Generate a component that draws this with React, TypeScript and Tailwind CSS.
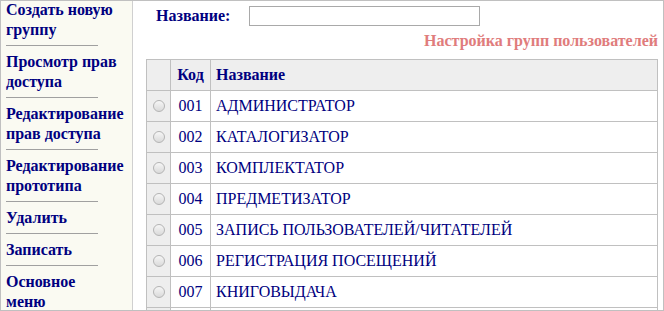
import React from "react";

const menu = [
  ["Создать новую", "группу"],
  ["Просмотр прав", "доступа"],
  ["Редактирование", "прав доступа"],
  ["Редактирование", "прототипа"],
  ["Удалить"],
  ["Записать"],
  ["Основное", "меню"],
];

const groups = [
  ["001", "АДМИНИСТРАТОР"],
  ["002", "КАТАЛОГИЗАТОР"],
  ["003", "КОМПЛЕКТАТОР"],
  ["004", "ПРЕДМЕТИЗАТОР"],
  ["005", "ЗАПИСЬ ПОЛЬЗОВАТЕЛЕЙ/ЧИТАТЕЛЕЙ"],
  ["006", "РЕГИСТРАЦИЯ ПОСЕЩЕНИЙ"],
  ["007", "КНИГОВЫДАЧА"],
];

function Radio() {
  return (
    <span className="block w-[12px] h-[12px] mx-auto rounded-full border border-[#b4b4b4] bg-gradient-to-b from-[#f6f6f6] to-[#dadada]" />
  );
}

export default function App() {
  return (
    <div
      className="w-[664px] h-[311px] border border-[#c0c0c0] overflow-hidden flex bg-white text-[#000080]"
      style={{ fontFamily: '"Liberation Serif", "Times New Roman", serif' }}
    >
      {/* left menu */}
      <div className="w-[132px] shrink-0 bg-[#fafaf2] border-r border-[#d0d0d0] pl-[5px] mt-[-1px]">
        {menu.map((item, i) => (
          <div key={i}>
            <div className="font-bold text-[16px] leading-[20px]">
              {item.map((line) => (
                <div key={line}>{line}</div>
              ))}
            </div>
            {i < menu.length - 1 && (
              <div className="w-[92px] h-px bg-[#a0a0a0] mt-[5px] mb-[6px]" />
            )}
          </div>
        ))}
      </div>

      {/* main */}
      <div className="flex-1 min-w-0">
        <div className="flex items-center pt-[5px] pl-[23px]">
          <span className="w-[93px] font-bold text-[16px] leading-[20px]">Название:</span>
          <input
            type="text"
            className="w-[231px] h-[20px] border border-[#a9a9a9] bg-white outline-none"
          />
        </div>

        <div className="pl-[13px] pr-[5px]">
          <div className="mt-[5px] text-right font-bold text-[16px] leading-[20px] text-[#e07c7c]">
            Настройка групп пользователей
          </div>

          <table className="mt-[8px] w-[512px] table-fixed border-collapse text-[16px]">
            <colgroup>
              <col className="w-[24px]" />
              <col className="w-[40px]" />
              <col />
            </colgroup>
            <thead>
              <tr className="h-[31px] bg-[#eeeeee]">
                <th className="border border-[#c0c0c0]" />
                <th className="border border-[#c0c0c0] font-bold text-center">Код</th>
                <th className="border border-[#c0c0c0] font-bold text-left pl-[5px]">Название</th>
              </tr>
            </thead>
            <tbody>
              {groups.map(([code, name]) => (
                <tr key={code} className="h-[31px]">
                  <td className="border border-[#c0c0c0] bg-[#eeeeee] align-middle">
                    <Radio />
                  </td>
                  <td className="border border-[#c0c0c0] text-center">{code}</td>
                  <td className="border border-[#c0c0c0] pl-[5px]">{name}</td>
                </tr>
              ))}
              <tr className="h-[31px]">
                <td className="border border-[#c0c0c0] bg-[#eeeeee]" />
                <td className="border border-[#c0c0c0]" />
                <td className="border border-[#c0c0c0]" />
              </tr>
            </tbody>
          </table>
        </div>
      </div>
    </div>
  );
}
